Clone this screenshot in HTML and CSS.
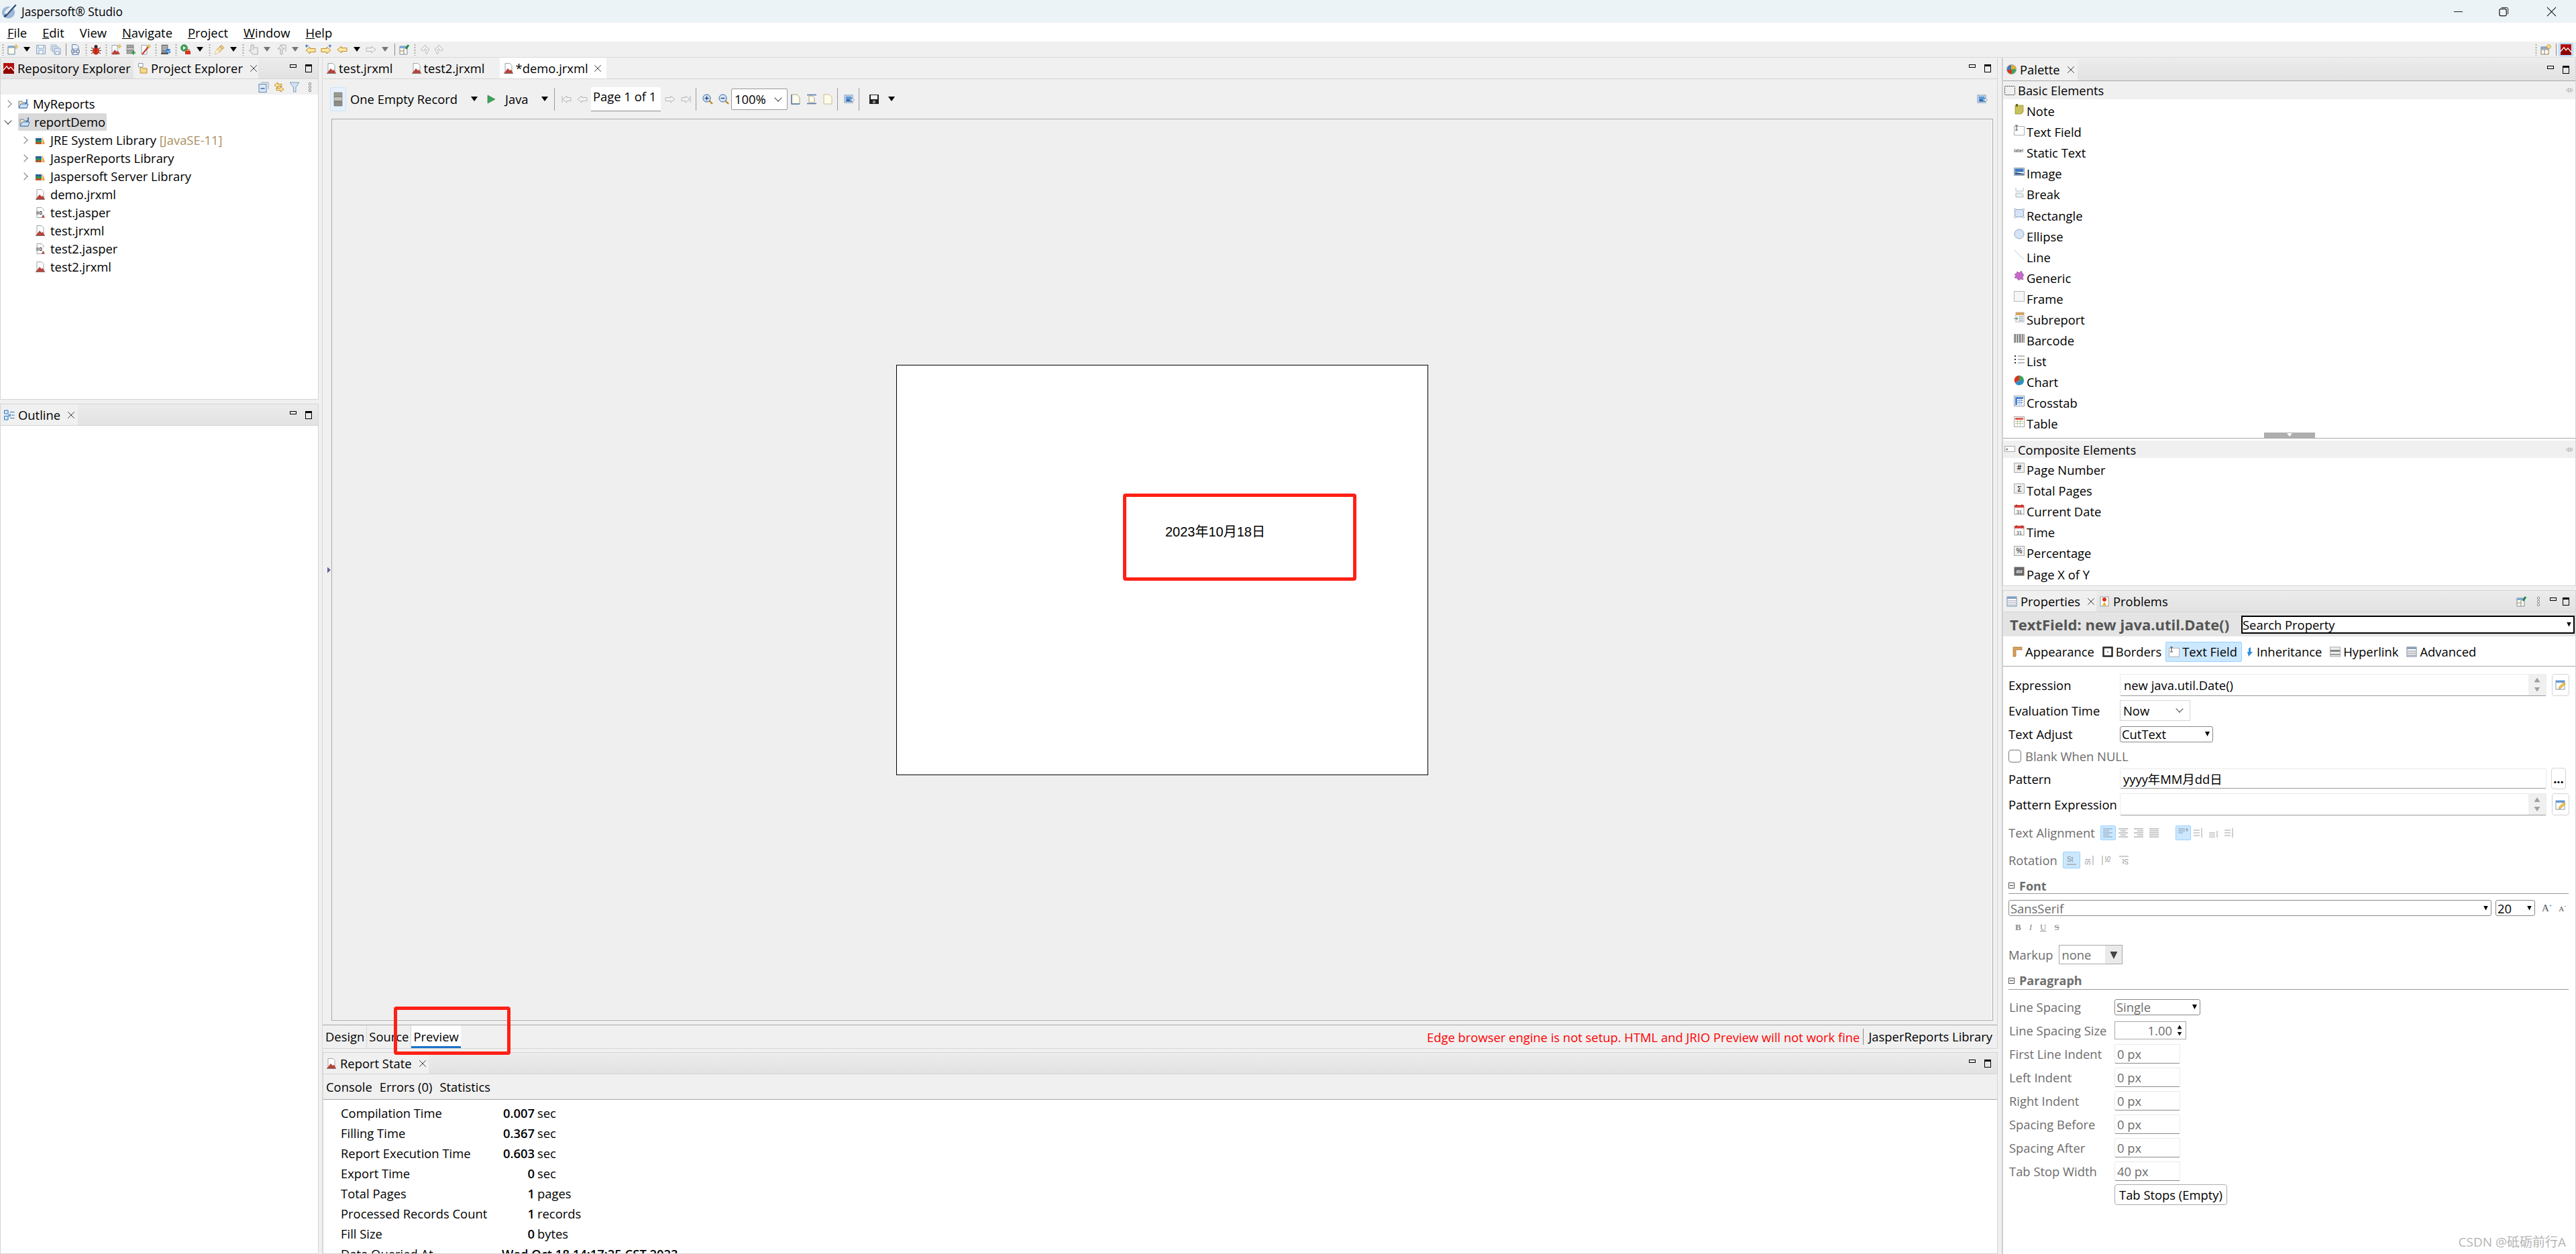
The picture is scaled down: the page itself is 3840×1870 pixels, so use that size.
FILE: index.html
```html
<!DOCTYPE html>
<html lang="en">
<head>
    <meta charset="UTF-8">
    <meta name="viewport" content="width=device-width, initial-scale=1.0">
    <title>Jaspersoft Studio</title>
    <link rel="stylesheet" href="styles.css">
</head>
<body>
<!-- icon sprite, every icon is on a 16x16 grid -->
<svg class="sprite" aria-hidden="true">
    <symbol id="logo" viewBox="0 0 16 16"><ellipse cx="7" cy="9" rx="6.5" ry="6" fill="#9db8d6"/><path d="M2 13 L14 1 L15 2 L4 14z" fill="#2a4a78"/><path d="M3 9 Q7 3 12 3 L5 11z" fill="#e8eef6"/></symbol>
    <symbol id="jr" viewBox="0 0 16 16"><rect width="16" height="16" fill="#b30f0f"/><path d="M0 11 L5 5 L8 9 L11 6 L16 12" fill="none" stroke="#fff" stroke-width="1.5"/><path d="M0 16 V12 L5 6 L8 10 L11 7 L16 13 V16z" fill="#8f0000"/></symbol>
    <symbol id="prj" viewBox="0 0 16 16"><path d="M2.5 .5 H9 V6 H2.5z" fill="#fff" stroke="#8a9ab0"/><path d="M5 6.5 H8 L9 8 H15 V15 H5z" fill="#f5d98c" stroke="#b98d35"/></symbol>
    <symbol id="fj" viewBox="0 0 16 16"><path d="M1 4 H6 L7 6 H13 V14 H1z" fill="#f4e6b8" stroke="#5e7ea8"/><path d="M1 14 L4 8 H15 L13 14z" fill="#cfe0f5" stroke="#3f70b0"/><path d="M13 1 V5 Q13 7 10 7" fill="none" stroke="#2a66c0" stroke-width="1.6"/></symbol>
    <symbol id="lib" viewBox="0 0 16 16"><rect x="1" y="11" width="9" height="3" fill="#b5562c"/><rect x="1" y="8" width="9" height="3" fill="#2f8f55"/><rect x="1" y="5" width="9" height="3" fill="#2a5f98"/><path d="M11 3 L15 14 H11z" fill="#e8a33a"/></symbol>
    <symbol id="jrxml" viewBox="0 0 16 16"><path d="M3 .5 H10 L13 3.5 V15.5 H3z" fill="#fff" stroke="#9aa3ad"/><path d="M1 15.5 L7 8 L10 11 L12 10 L15 15.5z" fill="#b8433a"/><path d="M1 15.5 H15" stroke="#7a7a7a"/></symbol>
    <symbol id="jasper" viewBox="0 0 16 16"><path d="M3 .5 H10 L13 3.5 V15.5 H3z" fill="#fff" stroke="#9aa3ad"/><path d="M2 6 H14 V11 H2z" fill="#fff"/><path d="M3 6 V11 M5 6 V11 M7.5 6.5 H10 V10.5 H7.5z" fill="none" stroke="#333"/><path d="M10 15.5 L12 11 L15 15.5z" fill="#b8433a"/></symbol>
    <symbol id="close" viewBox="0 0 16 16"><path d="M2.5 2.5 L13.5 13.5 M13.5 2.5 L2.5 13.5" stroke="#222" fill="none"/></symbol>
    <symbol id="winmin" viewBox="0 0 16 16"><path d="M1 8 H15" stroke="#111" stroke-width="1"/></symbol>
    <symbol id="winmax" viewBox="0 0 16 16"><rect x="1" y="3.5" width="11" height="11" rx="2" fill="none" stroke="#111" stroke-width="1.3"/><path d="M4 1.5 H12.5 Q14.5 1.5 14.5 3.5 V12" fill="none" stroke="#111"/></symbol>
    <symbol id="winx" viewBox="0 0 16 16"><path d="M1 1 L15 15 M15 1 L1 15" stroke="#111" stroke-width="1.1"/></symbol>

    <symbol id="new" viewBox="0 0 16 16"><path d="M1 3 H11 V15 H1z" fill="#fffbe8" stroke="#5b83b5"/><path d="M1 3 H11 V5.5 H1z" fill="#7fa8d8"/><path d="M13 0 L14 2.5 L16 3.5 L14 4.5 L13 7 L12 4.5 L10 3.5 L12 2.5z" fill="#f5d35c" stroke="#b98d35" stroke-width=".5"/></symbol>
    <symbol id="save" viewBox="0 0 16 16"><path d="M1.5 1.5 H14.5 V14.5 H1.5z" fill="#dce6f2" stroke="#8fa6c3"/><path d="M4 1.5 H12 V6 H4z M5 9 H11 V14.5 H5z" fill="#f7f9fc" stroke="#8fa6c3"/></symbol>
    <symbol id="saveall" viewBox="0 0 16 16"><path d="M1 1 H9 V9 H1z" fill="#dce6f2" stroke="#a5b5c8"/><path d="M3.5 3.5 H11.5 V11.5 H3.5z" fill="#dce6f2" stroke="#a5b5c8"/><path d="M6 6 H15 V15 H6z" fill="#dce6f2" stroke="#8fa6c3"/><path d="M8 11 H13 V15 H8z" fill="#fff" stroke="#8fa6c3"/></symbol>
    <symbol id="bin" viewBox="0 0 16 16"><path d="M2.5 .5 H9 L12 3.5 V7 H2.5z M2.5 14 V15.5 H12 V14" fill="#eef3fa" stroke="#5b83b5"/><rect x="1" y="7" width="14" height="7" fill="#fff"/><path d="M2 8 H5 V13 H2z M7 8 V13 M9.5 8 H13 V13 H9.5z" fill="none" stroke="#2a4a78"/></symbol>
    <symbol id="bug" viewBox="0 0 16 16"><path d="M1 5 L4 7 M15 5 L12 7 M1 14 L4 12 M15 14 L12 12 M0 9.5 H3 M16 9.5 H13" stroke="#333"/><ellipse cx="8" cy="10" rx="5" ry="5.5" fill="#d8341e"/><circle cx="8" cy="3.5" r="2.5" fill="#3a2a20"/><path d="M8 5 V15" stroke="#7a1608"/></symbol>
    <symbol id="newrep" viewBox="0 0 16 16"><path d="M2 1.5 H10 V15 H2z" fill="#fff" stroke="#9aa3ad"/><path d="M1 15 L6 8 L9 11 L11 10 L14 15z" fill="#b8433a"/><path d="M13 0 L14 2 L16 3 L14 4 L13 6 L12 4 L10 3 L12 2z" fill="#f5d35c" stroke="#b98d35" stroke-width=".5"/></symbol>
    <symbol id="dbplus" viewBox="0 0 16 16"><rect x="2" y="1" width="10" height="4" fill="#a7a7a7" stroke="#666" stroke-width=".6"/><rect x="2" y="5" width="10" height="4" fill="#c9c9c9" stroke="#666" stroke-width=".6"/><rect x="2" y="9" width="10" height="5" fill="#a7a7a7" stroke="#666" stroke-width=".6"/><path d="M9 12.5 H15 M12 9.5 V15.5" stroke="#2f9e44" stroke-width="2"/></symbol>
    <symbol id="wand" viewBox="0 0 16 16"><path d="M2 1.5 H10 V15 H2z" fill="#fff" stroke="#9aa3ad"/><path d="M3 15 L12 4" stroke="#c73b2b" stroke-width="2.2"/><path d="M13 0 L14 2 L16 3 L14 4 L13 6 L12 4 L10 3 L12 2z" fill="#f5d35c" stroke="#b98d35" stroke-width=".5"/></symbol>
    <symbol id="server" viewBox="0 0 16 16"><rect x="2" y="1" width="9" height="12" fill="#8b8f96" stroke="#555" stroke-width=".6"/><path d="M3 4 H10 M3 7 H10" stroke="#ddd"/><rect x="1" y="13" width="11" height="2" fill="#555"/><rect x="9" y="7" width="6" height="6" fill="#2a7fd4"/><path d="M10 10 L12 12 L15 8" stroke="#fff" fill="none"/></symbol>
    <symbol id="runrep" viewBox="0 0 16 16"><circle cx="5.5" cy="5.5" r="5" fill="#3da35a" stroke="#24733c" stroke-width=".6"/><path d="M4 3 L8 5.5 L4 8z" fill="#fff"/><rect x="7" y="10" width="8" height="5" fill="#d8341e"/><rect x="9" y="8" width="4" height="2" fill="none" stroke="#d8341e"/></symbol>
    <symbol id="pen" viewBox="0 0 16 16"><path d="M1 15 L4 8 L11 1 L15 5 L8 12z" fill="#f0d9a0" stroke="#b98d35" stroke-width=".7"/><path d="M1 15 L4 8 L8 12z" fill="#f9f1da"/><path d="M9 3 L13 7" stroke="#a8773a"/></symbol>
    <symbol id="navdown" viewBox="0 0 16 16"><path d="M5 1 H9 V9 H12 L7 14 L2 9 H5z" fill="#e8e8e8" stroke="#aaa"/><path d="M10 5 H15 V15 H7" fill="#eee" stroke="#aaa"/></symbol>
    <symbol id="navup" viewBox="0 0 16 16"><path d="M7 15 V7 H3 L8 2 L13 7 H10 V15z" fill="#e8e8e8" stroke="#aaa"/><path d="M6 1 H15 V11" fill="none" stroke="#aaa"/></symbol>
    <symbol id="yleft" viewBox="0 0 16 16"><path d="M1 8 L7 3 V5.5 H15 V10.5 H7 V13z" fill="#fde9a9" stroke="#c08a1e"/></symbol>
    <symbol id="yleftstar" viewBox="0 0 16 16"><path d="M1 9 L7 4 V6.5 H15 V11.5 H7 V14z" fill="#fde9a9" stroke="#c08a1e"/><path d="M2 0 V5 M0 2.5 H5" stroke="#2a5fb0"/></symbol>
    <symbol id="yrightstar" viewBox="0 0 16 16"><path d="M15 9 L9 4 V6.5 H1 V11.5 H9 V14z" fill="#fde9a9" stroke="#c08a1e"/><path d="M14 0 V5 M11.5 2.5 H16" stroke="#2a5fb0"/></symbol>
    <symbol id="gleft" viewBox="0 0 16 16"><path d="M1 8 L7 3 V5.5 H15 V10.5 H7 V13z" fill="#f2f2f2" stroke="#b5b5b5"/></symbol>
    <symbol id="gright" viewBox="0 0 16 16"><path d="M15 8 L9 3 V5.5 H1 V10.5 H9 V13z" fill="#f2f2f2" stroke="#b5b5b5"/></symbol>
    <symbol id="gfirst" viewBox="0 0 16 16"><path d="M2 3 V13" stroke="#b5b5b5"/><path d="M3 8 L9 3 V5.5 H15 V10.5 H9 V13z" fill="#f2f2f2" stroke="#b5b5b5"/></symbol>
    <symbol id="glast" viewBox="0 0 16 16"><path d="M14 3 V13" stroke="#b5b5b5"/><path d="M13 8 L7 3 V5.5 H1 V10.5 H7 V13z" fill="#f2f2f2" stroke="#b5b5b5"/></symbol>
    <symbol id="persp" viewBox="0 0 16 16"><path d="M1 3 H12 V15 H1z" fill="#fff" stroke="#7a8aa0"/><path d="M1 3 H12 V6 H1z" fill="#7fa8d8"/><path d="M7 15 V6 M1 10 H7" stroke="#9a7a3a"/><path d="M10 7 L14 1" stroke="#1e8a3e" stroke-width="3"/></symbol>
    <symbol id="tpl" viewBox="0 0 16 16"><rect x="1" y="4" width="11" height="11" fill="#fff" stroke="#8c7a50"/><path d="M1 8 H12 M6 8 V15" stroke="#8c7a50"/><rect x="1" y="4" width="11" height="3" fill="#7fa8d8"/><circle cx="12.5" cy="3.5" r="3" fill="#f5d98c" stroke="#c08a1e" stroke-width=".7"/></symbol>
    <symbol id="undo" viewBox="0 0 16 16"><path d="M2 8 L9 1 L10 4 L15 7 L11 15 L9 13 L11 8 L8 7 L7 10z" fill="#f2f2f2" stroke="#bdbdbd"/></symbol>
    <symbol id="redo" viewBox="0 0 16 16"><path d="M14 8 L7 1 L6 4 L1 7 L5 15 L7 13 L5 8 L8 7 L9 10z" fill="#f2f2f2" stroke="#bdbdbd"/></symbol>

    <symbol id="collapse" viewBox="0 0 16 16"><path d="M4 1 H15 V11" fill="none" stroke="#8da4c0"/><rect x="1" y="3.5" width="11" height="12" fill="#dce8f5" stroke="#5f87b8"/><path d="M3.5 10 H9.5" stroke="#2a5f98" stroke-width="1.4"/></symbol>
    <symbol id="link" viewBox="0 0 16 16"><path d="M1 5 L6 1 V3.5 H12 V6.5 H6 V9z" fill="#fde9a9" stroke="#c08a1e"/><path d="M15 11 L10 7 V9.5 H4 V12.5 H10 V15z" fill="#fde9a9" stroke="#c08a1e"/></symbol>
    <symbol id="filter" viewBox="0 0 16 16"><path d="M1 1 H15 L10 8 V15 L6.5 15 V8z" fill="#d3e4f5" stroke="#7e9cbd"/></symbol>
    <symbol id="dots" viewBox="0 0 16 16"><circle cx="8" cy="3" r="1.7" fill="#fff" stroke="#666" stroke-width=".8"/><circle cx="8" cy="8" r="1.7" fill="#fff" stroke="#666" stroke-width=".8"/><circle cx="8" cy="13" r="1.7" fill="#fff" stroke="#666" stroke-width=".8"/></symbol>
    <symbol id="outline" viewBox="0 0 16 16"><path d="M.5 1 H6 V6 H.5z M.5 9.5 H6 V15 H.5z M7 7 H9.5 V9.5 H7z" fill="#d8e8f8" stroke="#2a74bd"/><path d="M9 3.5 H15.5 M11 8 H15.5 M9 12.5 H15.5" stroke="#2a74bd"/></symbol>
    <symbol id="pin" viewBox="0 0 16 16"><path d="M1 8 L6 4 V12z M15 8 L10 4 V12z" fill="#fff" stroke="#777"/></symbol>

    <symbol id="db" viewBox="0 0 16 24"><rect x="2" y="2" width="12" height="6" fill="#9a9a92" stroke="#666" stroke-width=".6"/><rect x="2" y="8.5" width="12" height="6" fill="#c4c4bb" stroke="#666" stroke-width=".6"/><rect x="2" y="15" width="12" height="7" fill="#8d8d85" stroke="#666" stroke-width=".6"/></symbol>
    <symbol id="play" viewBox="0 0 16 16"><path d="M3 2 L14 8 L3 14z" fill="#3da35a" stroke="#24733c" stroke-width=".6"/></symbol>
    <symbol id="zoomin" viewBox="0 0 16 16"><path d="M10 10 L15 15" stroke="#c08a1e" stroke-width="2.4"/><circle cx="6.5" cy="6.5" r="5.5" fill="#d8e8f8" stroke="#2a5f98"/><path d="M3.5 6.5 H9.5 M6.5 3.5 V9.5" stroke="#1c3f78" stroke-width="1.4"/></symbol>
    <symbol id="zoomout" viewBox="0 0 16 16"><path d="M10 10 L15 15" stroke="#c08a1e" stroke-width="2.4"/><circle cx="6.5" cy="6.5" r="5.5" fill="#d8e8f8" stroke="#2a5f98"/><path d="M3.5 6.5 H9.5" stroke="#1c3f78" stroke-width="1.4"/></symbol>
    <symbol id="fitpage" viewBox="0 0 16 16"><path d="M2 1 H10 L14 5 V15 H2z" fill="#fdfbea" stroke="#a9a485"/><path d="M2 1 V15 H14" fill="none" stroke="#4e76ad" stroke-width="1.4"/></symbol>
    <symbol id="fitwidth" viewBox="0 0 16 16"><path d="M1 1.5 H15 M1 14.5 H15" stroke="#4e76ad" stroke-width="1.4"/><path d="M4 3 H9 L12 6 V13 H4z" fill="#fdfbea" stroke="#a9a485"/></symbol>
    <symbol id="actual" viewBox="0 0 16 16"><path d="M2 1 H10 L14 5 V15 H2z" fill="#fdfbea" stroke="#c9bc8f"/></symbol>
    <symbol id="export" viewBox="0 0 16 16"><rect x="1" y="2" width="12" height="11" fill="#fff" stroke="#6f8cb0"/><rect x="2.5" y="3.5" width="9" height="8" fill="#5f9ad8"/><path d="M2.5 11.5 L6 7 L8 9 L11.5 6 V11.5z" fill="#2f6aa8"/><path d="M9 8 H12 V6 L16 9 L12 12 V10 H9z" fill="#eef3fa" stroke="#5f87b8" stroke-width=".6"/></symbol>
    <symbol id="disk" viewBox="0 0 16 16"><path d="M1 1 H15 V15 H1z" fill="#222"/><rect x="3" y="2" width="10" height="6" fill="#f2f2f2"/><rect x="6" y="10" width="4" height="4" fill="#888"/></symbol>

    <symbol id="note" viewBox="0 0 16 16"><path d="M2 2 H14 V12 L11 15 H2z" fill="#c9c25a" stroke="#8e8a2a" stroke-width=".7"/><rect x="3" y="0" width="3" height="4" fill="#6e6a1c"/></symbol>
    <symbol id="tfield" viewBox="0 0 16 16"><rect x=".5" y="2.5" width="15" height="13" fill="#fff" stroke="#b0b0b0"/><path d="M2 1 H6 M4 1 V8 M2 8 H6" stroke="#444"/></symbol>
    <symbol id="image" viewBox="0 0 16 16"><rect x=".5" y="2.5" width="15" height="11" fill="#fff" stroke="#8a9bb0"/><rect x="1.5" y="3.5" width="13" height="5" fill="#3f78c0"/><path d="M1.5 12.5 V9 L15 11 V12.5z" fill="#2c4f7a"/></symbol>
    <symbol id="break" viewBox="0 0 16 16"><path d="M3 1 V6 H14 V1" fill="none" stroke="#b0b8c0"/><path d="M3 9 V15 H14 V11 L12 9z" fill="#e6eff2" stroke="#b0b8c0"/></symbol>
    <symbol id="rect" viewBox="0 0 16 16"><rect x="1.5" y="2.5" width="13" height="11" fill="#d5e3f5" stroke="#93a8c4"/><path d="M0 1 H3 V4 H0z M13 1 H16 V4 H13z M0 12 H3 V15 H0z M13 12 H16 V15 H13z" fill="#e8eef6" stroke="#8aa0bd" stroke-width=".5"/></symbol>
    <symbol id="ellipse" viewBox="0 0 16 16"><circle cx="8" cy="8" r="7" fill="#d5e3f5" stroke="#93a8c4"/></symbol>
    <symbol id="line" viewBox="0 0 16 16"><path d="M1 1 L15 15" stroke="#b4c6dc"/></symbol>
    <symbol id="generic" viewBox="0 0 16 16"><path d="M1 6 L4 5 L5 2 L8 4 L11 1 L13 5 L15 7 L13 10 L14 14 L10 13 L7 15 L5 12 L1 11 L3 8z" fill="#c66ac9" stroke="#8b3f8e" stroke-width=".6"/></symbol>
    <symbol id="frame" viewBox="0 0 16 16"><rect x=".5" y=".5" width="15" height="15" fill="#f6f6f6" stroke="#b9b9b9"/></symbol>
    <symbol id="subrep" viewBox="0 0 16 16"><rect x="3" y="1" width="12" height="14" fill="#fff" stroke="#b0b0b0"/><rect x="3" y="1" width="12" height="4" fill="#d9a25f"/><path d="M7 7 H14 M7 10 H14 M7 13 H14 M9 6 V14 M12 6 V14" stroke="#9ab0c8"/><path d="M0 10 H6 M3.5 8 L6 10 L3.5 12" stroke="#4a8a5a" fill="none"/></symbol>
    <symbol id="barcode" viewBox="0 0 16 16"><path d="M1 1 V14 M3 1 V14 M5.5 1 V14 M8 1 V14 M10 1 V14 M12.5 1 V14 M15 1 V14" stroke="#333" stroke-width="1"/></symbol>
    <symbol id="list" viewBox="0 0 16 16"><path d="M1 2 H3 V4 H1z M1 7 H3 V9 H1z M1 12 H3 V14 H1z" fill="#333"/><path d="M6 3 H16 M6 8 H16 M6 13 H16" stroke="#777"/></symbol>
    <symbol id="chart" viewBox="0 0 16 16"><path d="M8 8 V1 A7 7 0 0 1 15 8z" fill="#3ba55a"/><path d="M8 8 H15 A7 7 0 0 1 2 12z" fill="#2c8fc9"/><path d="M8 8 L2 12 A7 7 0 0 1 8 1z" fill="#d8341e"/></symbol>
    <symbol id="cross" viewBox="0 0 16 16"><rect x=".5" y=".5" width="15" height="15" fill="#fff" stroke="#8a9bb0"/><rect x="2" y="2" width="12" height="3" fill="#4d83cf"/><rect x="2" y="2" width="3" height="12" fill="#4d83cf"/><path d="M5 7.5 H14 M5 10.5 H14 M8 5 V14 M11 5 V14" stroke="#7ea4d8"/></symbol>
    <symbol id="table" viewBox="0 0 16 16"><rect x=".5" y=".5" width="15" height="15" fill="#fff" stroke="#a5a5a5"/><rect x="2" y="2" width="12" height="3" fill="#e65b4f"/><path d="M2 7.5 H14 M2 10.5 H14 M5.5 5 V14 M9.5 5 V14" stroke="#c0c8a0"/></symbol>
    <symbol id="dashed" viewBox="0 0 16 16"><rect x=".5" y="1.5" width="15" height="13" rx="1" fill="none" stroke="#222" stroke-dasharray="1.5 1.2"/></symbol>

    <symbol id="props" viewBox="0 0 16 16"><rect x="1" y="1" width="14" height="14" fill="#fff" stroke="#6f8cb0"/><rect x="1" y="1" width="14" height="3" fill="#7fa0c8"/><path d="M2 7 H14 M2 10 H14 M2 13 H14" stroke="#99a"/></symbol>
    <symbol id="problems" viewBox="0 0 16 16"><rect x="2" y="1" width="12" height="14" fill="#fff" stroke="#999"/><circle cx="8" cy="5" r="3" fill="#d8341e"/><path d="M5 14 L8 8.5 L11 14z" fill="#e8b020"/></symbol>
    <symbol id="appear" viewBox="0 0 16 16"><path d="M2 1 H15 V5 H6 V15 H2z" fill="#d9a25f" stroke="#9a6a2a" stroke-width=".7"/></symbol>
    <symbol id="borders" viewBox="0 0 16 16"><rect x="1.5" y="1.5" width="13" height="13" fill="#fff" stroke="#222" stroke-width="2.4"/><circle cx="8" cy="8" r="1" fill="#555"/></symbol>
    <symbol id="inherit" viewBox="0 0 16 16"><path d="M11 1 V8 H14 L8 15 L6 8 H8 V3z" fill="#2f8fe0"/></symbol>
    <symbol id="hyper" viewBox="0 0 16 16"><rect x=".5" y="1" width="15" height="14" fill="#eee" stroke="#aaa"/><rect x="1" y="5" width="14" height="3" fill="#888"/><rect x="1" y="11" width="14" height="2" fill="#999"/></symbol>
    <symbol id="adv" viewBox="0 0 16 16"><rect x="1" y="1" width="14" height="14" fill="#fff" stroke="#6f7f95"/><rect x="1" y="1" width="14" height="3" fill="#8aa0b8"/><path d="M2 7 H14 M2 10 H14 M2 13 H14" stroke="#778"/></symbol>
    <symbol id="edit" viewBox="0 0 16 16"><rect x="1" y="2" width="13" height="13" fill="#fff" stroke="#7a9ac0"/><rect x="1" y="2" width="13" height="3" fill="#5f9ad8"/><path d="M5 15 L6 11 L13 4 L15.5 6.5 L8.5 13.5z" fill="#f0c050" stroke="#b98d35" stroke-width=".6"/></symbol>
    <symbol id="al-l" viewBox="0 0 16 16"><path d="M1 2 H15 M1 5 H10 M1 8 H15 M1 11 H10 M1 14 H15" stroke="#7f95ad" stroke-width="1.1"/></symbol>
    <symbol id="al-c" viewBox="0 0 16 16"><path d="M1 2 H15 M4 5 H12 M1 8 H15 M4 11 H12 M1 14 H15" stroke="#8f8f8f" stroke-width="1.1"/></symbol>
    <symbol id="al-r" viewBox="0 0 16 16"><path d="M1 2 H15 M6 5 H15 M1 8 H15 M6 11 H15 M1 14 H15" stroke="#8f8f8f" stroke-width="1.1"/></symbol>
    <symbol id="al-j" viewBox="0 0 16 16"><path d="M1 2 H15 M1 5 H15 M1 8 H15 M1 11 H15 M1 14 H15" stroke="#8f8f8f" stroke-width="1.1"/></symbol>
    <symbol id="va-t" viewBox="0 0 16 16"><path d="M1 2 H11 M1 5 H11 M1 8 H8" stroke="#7f95ad"/><path d="M14 1 V6 M12 3 H16" stroke="#8f8f8f"/></symbol>
    <symbol id="va-m" viewBox="0 0 16 16"><path d="M1 4 H10 M1 8 H10 M1 12 H10" stroke="#a0a0a0"/><path d="M13 1 V15" stroke="#a0a0a0"/></symbol>
    <symbol id="va-b" viewBox="0 0 16 16"><path d="M1 8 H10 M1 11 H10 M1 14 H10" stroke="#a0a0a0"/><path d="M13 5 V15" stroke="#a0a0a0"/></symbol>
</svg>

<div class="app">
    <div class="titlebar">
        <svg class="ic logo"><use href="#logo"/></svg>
        <span class="title-text">Jaspersoft® Studio</span>
        <div class="win-btns">
            <svg class="win-btn"><use href="#winmin"/></svg>
            <svg class="win-btn"><use href="#winmax"/></svg>
            <svg class="win-btn"><use href="#winx"/></svg>
        </div>
    </div>
    <div class="menubar">
        <span><u>F</u>ile</span><span><u>E</u>dit</span><span>View</span><span><u>N</u>avigate</span><span><u>P</u>roject</span><span><u>W</u>indow</span><span><u>H</u>elp</span>
    </div>
    <div class="toolbar">
        <i class="grip"></i>
        <span class="cell"><svg class="ic"><use href="#new"/></svg></span><i class="arrow"></i>
        <span class="cell"><svg class="ic"><use href="#save"/></svg></span>
        <span class="cell"><svg class="ic"><use href="#saveall"/></svg></span>
        <i class="vsep"></i>
        <span class="cell"><svg class="ic"><use href="#bin"/></svg></span>
        <i class="grip"></i>
        <span class="cell"><svg class="ic"><use href="#bug"/></svg></span>
        <i class="grip"></i>
        <span class="cell"><svg class="ic"><use href="#newrep"/></svg></span>
        <span class="cell"><svg class="ic"><use href="#dbplus"/></svg></span>
        <span class="cell"><svg class="ic"><use href="#wand"/></svg></span>
        <i class="grip"></i>
        <span class="cell"><svg class="ic"><use href="#server"/></svg></span>
        <i class="grip"></i>
        <span class="cell"><svg class="ic"><use href="#runrep"/></svg></span><i class="arrow"></i>
        <i class="grip"></i>
        <span class="cell"><svg class="ic"><use href="#pen"/></svg></span><i class="arrow"></i>
        <i class="grip"></i>
        <span class="cell"><svg class="ic"><use href="#navdown"/></svg></span><i class="arrow off"></i>
        <span class="cell"><svg class="ic"><use href="#navup"/></svg></span><i class="arrow off"></i>
        <span class="cell wide"><svg class="ic"><use href="#yleftstar"/></svg></span>
        <span class="cell"><svg class="ic"><use href="#yrightstar"/></svg></span>
        <span class="cell wide"><svg class="ic"><use href="#yleft"/></svg></span><i class="arrow"></i>
        <span class="cell"><svg class="ic"><use href="#gright"/></svg></span><i class="arrow off"></i>
        <i class="vsep"></i>
        <span class="cell"><svg class="ic"><use href="#persp"/></svg></span>
        <i class="grip"></i>
        <span class="cell"><svg class="ic"><use href="#undo"/></svg></span>
        <span class="cell"><svg class="ic"><use href="#redo"/></svg></span>
        <div class="toolbar-end">
            <i class="grip"></i>
            <span class="cell"><svg class="ic"><use href="#tpl"/></svg></span>
            <i class="vsep"></i>
            <span class="persp-btn"><svg class="ic"><use href="#jr"/></svg></span>
        </div>
    </div>

    <div class="workbench">
        <!-- left column -->
        <div class="col-left">
            <section class="panel project">
                <div class="strip">
                    <div class="tab"><svg class="ic"><use href="#jr"/></svg>Repository Explorer</div>
                    <div class="tab on"><svg class="ic"><use href="#prj"/></svg>Project Explorer<svg class="x"><use href="#close"/></svg></div>
                    <div class="min-max"><i class="min"></i><i class="max"></i></div>
                </div>
                <div class="view-tools">
                    <svg class="ic"><use href="#collapse"/></svg>
                    <svg class="ic"><use href="#link"/></svg>
                    <svg class="ic"><use href="#filter"/></svg>
                    <svg class="ic"><use href="#dots"/></svg>
                </div>
                <ul class="tree">
                    <li><i class="chev"></i><svg class="ic"><use href="#fj"/></svg><span>MyReports</span></li>
                    <li><i class="chev open"></i><span class="sel"><svg class="ic"><use href="#fj"/></svg>reportDemo</span></li>
                    <li class="sub"><i class="chev"></i><svg class="ic"><use href="#lib"/></svg><span>JRE System Library <em>[JavaSE-11]</em></span></li>
                    <li class="sub"><i class="chev"></i><svg class="ic"><use href="#lib"/></svg><span>JasperReports Library</span></li>
                    <li class="sub"><i class="chev"></i><svg class="ic"><use href="#lib"/></svg><span>Jaspersoft Server Library</span></li>
                    <li class="sub"><i class="chev none"></i><svg class="ic"><use href="#jrxml"/></svg><span>demo.jrxml</span></li>
                    <li class="sub"><i class="chev none"></i><svg class="ic"><use href="#jasper"/></svg><span>test.jasper</span></li>
                    <li class="sub"><i class="chev none"></i><svg class="ic"><use href="#jrxml"/></svg><span>test.jrxml</span></li>
                    <li class="sub"><i class="chev none"></i><svg class="ic"><use href="#jasper"/></svg><span>test2.jasper</span></li>
                    <li class="sub"><i class="chev none"></i><svg class="ic"><use href="#jrxml"/></svg><span>test2.jrxml</span></li>
                </ul>
            </section>
            <section class="panel outline">
                <div class="strip">
                    <div class="tab on"><svg class="ic"><use href="#outline"/></svg>Outline<svg class="x"><use href="#close"/></svg></div>
                    <div class="min-max"><i class="min"></i><i class="max"></i></div>
                </div>
            </section>
        </div>
        <div class="sash"><i class="sash-arrow"></i></div>

        <!-- editor and report state -->
        <div class="col-center">
            <section class="editor">
                <div class="strip plain">
                    <div class="tab"><svg class="ic"><use href="#jrxml"/></svg>test.jrxml</div>
                    <div class="tab"><svg class="ic"><use href="#jrxml"/></svg>test2.jrxml</div>
                    <div class="tab white"><svg class="ic"><use href="#jrxml"/></svg>*demo.jrxml<svg class="x"><use href="#close"/></svg></div>
                    <div class="min-max"><i class="min"></i><i class="max"></i></div>
                </div>
                <div class="edit-tools">
                    <span class="db-btn"><svg class="db-ic"><use href="#db"/></svg></span>
                    <span class="tool-text">One Empty Record</span><i class="arrow a-record"></i>
                    <svg class="ic nudge"><use href="#play"/></svg>
                    <span class="tool-text java">Java</span><i class="arrow a-java"></i>
                    <i class="tall-sep"></i>
                    <svg class="ic sm"><use href="#gfirst"/></svg><svg class="ic sm"><use href="#gleft"/></svg>
                    <span class="page-box">Page 1 of 1</span>
                    <svg class="ic sm"><use href="#gright"/></svg><svg class="ic sm"><use href="#glast"/></svg>
                    <i class="tall-sep"></i>
                    <svg class="ic sm"><use href="#zoomin"/></svg><svg class="ic sm"><use href="#zoomout"/></svg>
                    <span class="zoom-box">100%<i class="chev open"></i></span>
                    <svg class="ic sm"><use href="#fitpage"/></svg><svg class="ic sm"><use href="#fitwidth"/></svg><svg class="ic sm"><use href="#actual"/></svg>
                    <i class="tall-sep"></i>
                    <svg class="ic sm"><use href="#export"/></svg>
                    <i class="tall-sep"></i>
                    <svg class="ic disk"><use href="#disk"/></svg><i class="arrow a-disk"></i>
                    <svg class="ic far-end"><use href="#export"/></svg>
                </div>
                <div class="canvas">
                    <div class="page">
                        <div class="page-date">2023年10月18日</div>
                    </div>
                </div>
                <div class="editor-foot">
                    <span class="foot-tab">Design</span>
                    <span class="foot-tab">Source</span>
                    <span class="foot-tab active">Preview</span>
                    <span class="engine-msg">Edge browser engine is not setup. HTML and JRIO Preview will not work fine</span>
                    <span class="lib-name">JasperReports Library</span>
                </div>
            </section>
            <section class="panel state">
                <div class="strip">
                    <div class="tab on"><svg class="ic"><use href="#jrxml"/></svg>Report State<svg class="x"><use href="#close"/></svg></div>
                    <div class="min-max"><i class="min"></i><i class="max"></i></div>
                </div>
                <div class="state-tabs"><span>Console</span><span>Errors (0)</span><span>Statistics</span></div>
                <div class="stats">
                    <div class="stat"><span class="k">Compilation Time</span><b>0.007</b><span>sec</span></div>
                    <div class="stat"><span class="k">Filling Time</span><b>0.367</b><span>sec</span></div>
                    <div class="stat"><span class="k">Report Execution Time</span><b>0.603</b><span>sec</span></div>
                    <div class="stat"><span class="k">Export Time</span><b>0</b><span>sec</span></div>
                    <div class="stat"><span class="k">Total Pages</span><b>1</b><span>pages</span></div>
                    <div class="stat"><span class="k">Processed Records Count</span><b>1</b><span>records</span></div>
                    <div class="stat"><span class="k">Fill Size</span><b>0</b><span>bytes</span></div>
                    <div class="stat"><span class="k">Data Queried At</span><b class="wide">Wed Oct 18 14:17:25 CST 2023</b></div>
                </div>
            </section>
        </div>

        <!-- palette and properties -->
        <div class="col-right">
            <section class="panel palette">
                <div class="strip">
                    <div class="tab on"><span class="dot-ic"></span>Palette<svg class="x"><use href="#close"/></svg></div>
                    <div class="min-max"><i class="min"></i><i class="max"></i></div>
                </div>
                <div class="pal-head"><svg class="ic"><use href="#dashed"/></svg>Basic Elements<svg class="ic pin"><use href="#pin"/></svg></div>
                <div class="pal-list basic">
                    <div class="pal-item"><svg class="ic"><use href="#note"/></svg>Note</div>
                    <div class="pal-item"><svg class="ic"><use href="#tfield"/></svg>Text Field</div>
                    <div class="pal-item"><svg class="ic" viewBox="0 0 16 16"><text x="0" y="10" font-family="Liberation Sans, sans-serif" font-size="6.6" fill="#333">label</text></svg>Static Text</div>
                    <div class="pal-item"><svg class="ic"><use href="#image"/></svg>Image</div>
                    <div class="pal-item"><svg class="ic"><use href="#break"/></svg>Break</div>
                    <div class="pal-item"><svg class="ic"><use href="#rect"/></svg>Rectangle</div>
                    <div class="pal-item"><svg class="ic"><use href="#ellipse"/></svg>Ellipse</div>
                    <div class="pal-item"><svg class="ic"><use href="#line"/></svg>Line</div>
                    <div class="pal-item"><svg class="ic"><use href="#generic"/></svg>Generic</div>
                    <div class="pal-item"><svg class="ic"><use href="#frame"/></svg>Frame</div>
                    <div class="pal-item"><svg class="ic"><use href="#subrep"/></svg>Subreport</div>
                    <div class="pal-item"><svg class="ic"><use href="#barcode"/></svg>Barcode</div>
                    <div class="pal-item"><svg class="ic"><use href="#list"/></svg>List</div>
                    <div class="pal-item"><svg class="ic"><use href="#chart"/></svg>Chart</div>
                    <div class="pal-item"><svg class="ic"><use href="#cross"/></svg>Crosstab</div>
                    <div class="pal-item"><svg class="ic"><use href="#table"/></svg>Table</div>
                    <div class="pal-item"><svg class="ic"><use href="#image"/></svg></div>
                    <span class="pal-more"></span>
                </div>
                <div class="pal-head second"><svg class="ic" viewBox="0 0 16 16"><rect x=".5" y="3.5" width="15" height="8" fill="#fff" stroke="#aaa"/><text x="2" y="10" font-family="Liberation Sans, sans-serif" font-size="6" fill="#555">#</text></svg>Composite Elements<svg class="ic pin"><use href="#pin"/></svg></div>
                <div class="pal-list">
                    <div class="pal-item"><svg class="ic" viewBox="0 0 16 16"><rect x=".5" y=".5" width="15" height="14" fill="#eee" stroke="#aaa"/><text x="8" y="11" text-anchor="middle" font-family="Liberation Sans, sans-serif" font-size="11" font-weight="bold" fill="#222">#</text></svg>Page Number</div>
                    <div class="pal-item"><svg class="ic" viewBox="0 0 16 16"><rect x=".5" y=".5" width="15" height="14" fill="#eee" stroke="#aaa"/><text x="8" y="11.5" text-anchor="middle" font-family="DejaVu Sans, sans-serif" font-size="10.5" fill="#222">Σ</text></svg>Total Pages</div>
                    <div class="pal-item"><svg class="ic" viewBox="0 0 16 16"><rect x="1" y="2" width="14" height="13" fill="#fff" stroke="#999"/><rect x="1" y="1" width="14" height="4" fill="#d8443a"/><path d="M4 0 V3 M12 0 V3" stroke="#a02018"/><text x="8" y="13.5" text-anchor="middle" font-family="Liberation Sans, sans-serif" font-size="7.5" fill="#333">31</text></svg>Current Date</div>
                    <div class="pal-item"><svg class="ic" viewBox="0 0 16 16"><rect x="1" y="2" width="14" height="13" fill="#fff" stroke="#999"/><rect x="1" y="1" width="14" height="4" fill="#d8443a"/><path d="M4 0 V3 M12 0 V3" stroke="#a02018"/><text x="8" y="13.5" text-anchor="middle" font-family="Liberation Sans, sans-serif" font-size="7.5" fill="#333">31</text></svg>Time</div>
                    <div class="pal-item"><svg class="ic" viewBox="0 0 16 16"><rect x=".5" y=".5" width="15" height="14" fill="#eee" stroke="#aaa"/><text x="8" y="11" text-anchor="middle" font-family="Liberation Sans, sans-serif" font-size="10" fill="#222">%</text></svg>Percentage</div>
                    <div class="pal-item"><svg class="ic" viewBox="0 0 16 16"><rect x=".5" y=".5" width="15" height="13" fill="#666"/><text x="8" y="9.5" text-anchor="middle" font-family="Liberation Sans, sans-serif" font-size="6.6" font-weight="bold" fill="#fff">#/#</text></svg>Page X of Y</div>
                </div>
            </section>

            <section class="panel props">
                <div class="strip">
                    <div class="tab on"><svg class="ic"><use href="#props"/></svg>Properties<svg class="x"><use href="#close"/></svg></div>
                    <div class="tab"><svg class="ic"><use href="#problems"/></svg>Problems</div>
                    <div class="min-max"><svg class="ic"><use href="#persp"/></svg><svg class="ic"><use href="#dots"/></svg><i class="min"></i><i class="max"></i></div>
                </div>
                <div class="prop-title">
                    <span class="prop-name">TextField: new java.util.Date()</span>
                    <span class="search-box">Search Property<i class="tiny-arrow"></i></span>
                </div>
                <div class="prop-tabs">
                    <span class="ptab"><svg class="ic"><use href="#appear"/></svg>Appearance</span>
                    <span class="ptab"><svg class="ic sm2"><use href="#borders"/></svg>Borders</span>
                    <span class="ptab on"><svg class="ic"><use href="#tfield"/></svg>Text Field</span>
                    <span class="ptab"><svg class="ic"><use href="#inherit"/></svg>Inheritance</span>
                    <span class="ptab"><svg class="ic"><use href="#hyper"/></svg>Hyperlink</span>
                    <span class="ptab"><svg class="ic"><use href="#adv"/></svg>Advanced</span>
                </div>

                <div class="prop-form">
                    <div class="row"><label class="lbl">Expression</label>
                        <div class="field tall">new java.util.Date()<span class="spin-col"><i class="up"></i><i class="down"></i></span></div>
                        <span class="edit-btn"><svg class="ic"><use href="#edit"/></svg></span></div>
                    <div class="row"><label class="lbl">Evaluation Time</label>
                        <div class="win-combo">Now<i class="chev open"></i></div></div>
                    <div class="row"><label class="lbl">Text Adjust</label>
                        <div class="combo adjust">CutText<i class="tiny-arrow"></i></div></div>
                    <div class="row"><span class="check"></span><label class="off">Blank When NULL</label></div>
                    <div class="row"><label class="lbl">Pattern</label>
                        <div class="field">yyyy年MM月dd日</div><span class="dots-btn">...</span></div>
                    <div class="row"><label class="lbl">Pattern Expression</label>
                        <div class="field tall"><span class="spin-col"><i class="up"></i><i class="down"></i></span></div>
                        <span class="edit-btn"><svg class="ic"><use href="#edit"/></svg></span></div>
                    <div class="row icons"><label class="off">Text Alignment</label>
                        <span class="ia on"><svg class="ic"><use href="#al-l"/></svg></span>
                        <span class="ia"><svg class="ic"><use href="#al-c"/></svg></span>
                        <span class="ia"><svg class="ic"><use href="#al-r"/></svg></span>
                        <span class="ia"><svg class="ic"><use href="#al-j"/></svg></span>
                        <span class="ia on second"><svg class="ic"><use href="#va-t"/></svg></span>
                        <span class="ia"><svg class="ic"><use href="#va-m"/></svg></span>
                        <span class="ia"><svg class="ic"><use href="#va-b"/></svg></span>
                        <span class="ia"><svg class="ic"><use href="#va-m"/></svg></span>
                    </div>
                    <div class="row icons"><label class="off">Rotation</label>
                        <span class="ia on rot"><svg class="ic" viewBox="0 0 16 16"><text x="1" y="10" font-family="Liberation Sans, sans-serif" font-size="10" fill="#8a8a8a">St</text><path d="M1 14 H15" stroke="#8a8a8a"/></svg></span>
                        <span class="ia rot"><svg class="ic" viewBox="0 0 16 16"><text transform="translate(10 15) rotate(-90)" font-family="Liberation Sans, sans-serif" font-size="10" fill="#9a9a9a">St</text><path d="M14 1 V15" stroke="#9a9a9a"/></svg></span>
                        <span class="ia rot"><svg class="ic" viewBox="0 0 16 16"><text transform="translate(6 1) rotate(90)" font-family="Liberation Sans, sans-serif" font-size="10" fill="#9a9a9a">St</text><path d="M2 1 V15" stroke="#9a9a9a"/></svg></span>
                        <span class="ia rot"><svg class="ic" viewBox="0 0 16 16"><text transform="translate(15 6) rotate(180)" font-family="Liberation Sans, sans-serif" font-size="10" fill="#9a9a9a">St</text><path d="M1 2 H15" stroke="#9a9a9a"/></svg></span>
                    </div>
                </div>

                <h4 class="sec-head font"><i class="minus"></i>Font</h4>
                <div class="font-row">
                    <div class="combo family off">SansSerif<i class="tiny-arrow"></i></div>
                    <div class="combo size">20<i class="tiny-arrow"></i></div>
                    <span class="font-step">A<sup>+</sup></span><span class="font-step small">A<sup>-</sup></span>
                </div>
                <div class="biu"><b>B</b><i>I</i><u>U</u><s>S</s></div>
                <div class="row markup"><label class="off">Markup</label><div class="markup-combo">none<span class="drop"></span></div></div>

                <h4 class="sec-head para"><i class="minus"></i>Paragraph</h4>
                <div class="para-form">
                    <div class="row"><label class="lbl off">Line Spacing</label><div class="combo spacing off">Single<i class="tiny-arrow"></i></div></div>
                    <div class="row"><label class="lbl off">Line Spacing Size</label><div class="spinner">1.00<span class="spin-btns"><i class="up dark"></i><i class="down dark"></i></span></div></div>
                    <div class="row"><label class="lbl off">First Line Indent</label><div class="px-field">0 px</div></div>
                    <div class="row"><label class="lbl off">Left Indent</label><div class="px-field">0 px</div></div>
                    <div class="row"><label class="lbl off">Right Indent</label><div class="px-field">0 px</div></div>
                    <div class="row"><label class="lbl off">Spacing Before</label><div class="px-field">0 px</div></div>
                    <div class="row"><label class="lbl off">Spacing After</label><div class="px-field">0 px</div></div>
                    <div class="row"><label class="lbl off">Tab Stop Width</label><div class="px-field">40 px</div></div>
                    <div class="row"><span class="lbl"></span><button class="tab-stops">Tab Stops (Empty)</button></div>
                </div>
                <div class="watermark">CSDN @砥砺前行A</div>
            </section>
        </div>
    </div>

    <!-- red marks drawn over the screenshot -->
    <div class="mark mark-date"></div>
    <div class="mark mark-preview"></div>
</div>
</body>
</html>
```

FILE: styles.css
```css
* {
    box-sizing: border-box;
}
html, body {
    margin: 0;
    padding: 0;
}
body {
    font: 18.4px "Open Sans", "Noto Sans CJK SC", sans-serif;
    color: #000;
    background-color: #F0F0F0;
}
ul {
    list-style: none;
    margin: 0;
    padding: 0;
}
.sprite {
    position: absolute;
    width: 0;
    height: 0;
}
.ic {
    width: 16px;
    height: 16px;
    flex: none;
    display: block;
}
.app {
    position: relative;
    width: 3840px;
    height: 1870px;
    overflow: hidden;
    display: flex;
    flex-direction: column;
}

/* title, menu and main toolbar */
.titlebar {
    height: 34px;
    flex: none;
    background-color: #ECF3F7;
    display: flex;
    align-items: center;
    padding-left: 2px;
    font-size: 17.3px;
}
.logo {
    width: 24px;
    height: 24px;
    margin-right: 6px;
}
.win-btns {
    margin-left: auto;
    display: flex;
}
.win-btn {
    width: 15px;
    height: 15px;
    margin-right: 53px;
}
.win-btn:nth-child(2) {
    margin-right: 56px;
}
.win-btn:last-child {
    margin-right: 29px;
}
.menubar {
    height: 28px;
    flex: none;
    background-color: #FFFFFF;
    display: flex;
    align-items: center;
    padding-left: 11px;
    gap: 23px;
}
.toolbar {
    height: 24px;
    flex: none;
    background-color: #F0F0F0;
    display: flex;
    align-items: center;
    border-bottom: 1px solid #DADADA;
}
.toolbar-end {
    margin-left: auto;
    display: flex;
    align-items: center;
    padding-right: 4px;
}
.cell {
    width: 22px;
    display: flex;
    justify-content: center;
}
.cell.wide {
    width: 25px;
}
.grip {
    width: 8px;
    height: 18px;
    background: radial-gradient(circle, #A8A8A0 1px, transparent 1.2px) center top / 3px 4px repeat-y;
}
.vsep {
    width: 8px;
    height: 18px;
    background: linear-gradient(#8A8A8A, #8A8A8A) center / 1px 100% no-repeat;
}
.arrow {
    width: 20px;
    height: 7px;
    flex: none;
    background: #000;
    clip-path: polygon(5px 0, 15px 0, 10px 7px);
}
.arrow.off {
    background: #777;
}
.persp-btn {
    width: 22px;
    height: 20px;
    border: 1px solid #99D1FF;
    border-radius: 3px;
    background-color: #CCE8FF;
    display: flex;
    align-items: center;
    justify-content: center;
}

/* workbench */
.workbench {
    flex: 1;
    min-height: 0;
    display: flex;
}
.col-left {
    width: 475px;
    flex: none;
    display: flex;
    flex-direction: column;
}
.sash {
    width: 5px;
    flex: none;
    display: flex;
    align-items: center;
}
.sash-arrow {
    width: 5px;
    height: 9px;
    margin: 0 0 256px 13px;
    flex: none;
    background: #6060A0;
    clip-path: polygon(0 0, 100% 50%, 0 100%);
}
.col-center {
    width: 2498px;
    flex: none;
    display: flex;
    flex-direction: column;
    border-left: 1px solid #DADADA;
}
.col-right {
    width: 856px;
    flex: none;
    margin-left: 6px;
    display: flex;
    flex-direction: column;
    border-left: 1px solid #C8C8C8;
}
.panel {
    background-color: #FFFFFF;
    border-right: 1px solid #D5D5D5;
    border-left: 1px solid #D5D5D5;
    border-bottom: 1px solid #D5D5D5;
}
.strip {
    height: 32px;
    display: flex;
    background: linear-gradient(#ECECEC, #E2E2E2);
    border-bottom: 1px solid #D5D5D5;
}
.strip.plain {
    background: #F0F0F0;
}
.tab {
    display: flex;
    align-items: center;
    padding: 0 7px 0 4px;
    gap: 5px;
    white-space: nowrap;
}
.tab.on {
    background-color: #F0F0F0;
}
.tab.white {
    background-color: #FFFFFF;
}
.x {
    width: 14px;
    height: 14px;
    flex: none;
    margin-left: 4px;
}
.min-max {
    margin-left: auto;
    display: flex;
    align-items: center;
    gap: 13px;
    padding-right: 9px;
}
.min {
    width: 10px;
    height: 5px;
    border: 1.5px solid #000;
    margin-bottom: 7px;
}
.max {
    width: 10px;
    height: 12px;
    border: 1.5px solid #000;
    border-top-width: 3px;
}

/* project explorer */
.project {
    height: 510px;
    flex: none;
}
.project .tab:first-child {
    padding-left: 4px;
    width: 198px;
}
.project .tab.on {
    width: 186px;
    padding-left: 5px;
}
.view-tools {
    height: 23px;
    background-color: #F0F0F0;
    display: flex;
    align-items: center;
    justify-content: flex-end;
    gap: 7px;
    padding-right: 4px;
}
.tree li {
    height: 27px;
    display: flex;
    align-items: center;
    padding-left: 6px;
}
.tree li .ic {
    margin-left: 8px;
    margin-right: 3px;
}
.tree li.sub {
    padding-left: 30px;
}
.tree li.sub .ic {
    margin-left: 9px;
    margin-right: 4px;
}
.tree span {
    padding: 0 3px;
    line-height: 26px;
    white-space: nowrap;
}
.tree em {
    font-style: normal;
    color: #A89060;
}
.tree span.sel {
    background-color: #D9D9D9;
    border-radius: 2px;
    display: flex;
    align-items: center;
    margin-left: 8px;
    padding: 0 2px;
}
.tree li .sel .ic {
    margin: 0 6px 0 0;
}
.chev {
    width: 12px;
    height: 12px;
    flex: none;
    display: inline-block;
    position: relative;
}
.chev::before {
    content: "";
    position: absolute;
    left: 1px;
    top: 2px;
    width: 7px;
    height: 7px;
    border-top: 1px solid #777;
    border-right: 1px solid #777;
    transform: rotate(45deg);
}
.chev.open::before {
    transform: rotate(135deg);
    top: 0;
    border-color: #444;
}
.chev.none::before {
    display: none;
}
.outline {
    margin-top: 6px;
    flex: 1;
    border-top: 1px solid #D5D5D5;
}
.outline .tab.on {
    width: 115px;
    padding-left: 5px;
}

/* editor */
.editor {
    height: 1478px;
    flex: none;
    display: flex;
    flex-direction: column;
    border-right: 1px solid #D5D5D5;
}
.editor .tab {
    padding: 0 22px 0 5px;
    gap: 3px;
}
.editor .tab.white {
    padding: 0 6px 0 5px;
}
.edit-tools {
    height: 59px;
    flex: none;
    display: flex;
    align-items: center;
    padding-left: 11px;
}
.db-btn {
    width: 24px;
    height: 36px;
    border: 1px solid #CDE4F8;
    border-radius: 3px;
    background-color: #E5F1FB;
    display: flex;
    align-items: center;
    justify-content: center;
    margin-right: 6px;
}
.db-ic {
    width: 16px;
    height: 24px;
}
.tool-text {
    width: 162px;
    flex: none;
    white-space: nowrap;
}
.a-record {
    margin-left: 13px;
}
.nudge {
    margin: 0 13px 0 7px;
}
.tool-text.java {
    width: 37px;
}
.a-java {
    margin: 0 6px 0 12px;
}
.tall-sep {
    width: 1px;
    height: 34px;
    flex: none;
    background-color: #9A9A9A;
    margin: 0 9px 0 -2px;
}
.sm {
    margin-right: 8px;
}
.page-box {
    width: 104px;
    height: 36px;
    margin: 0 6px 0 -3px;
    background-color: #FFFFFF;
    border-bottom: 1px solid #8A8A8A;
    padding: 0 3px;
    line-height: 28px;
    white-space: nowrap;
}
.zoom-box {
    width: 84px;
    height: 32px;
    margin: 0 4px 0 -5px;
    background-color: #FFFFFF;
    border: 1px solid #9A9A9A;
    border-radius: 2px;
    padding-left: 4px;
    display: flex;
    align-items: center;
    justify-content: space-between;
}
.zoom-box .chev {
    margin-right: 6px;
}
.disk {
    margin-left: 5px;
}
.a-disk {
    margin-left: 8px;
}
.far-end {
    margin-left: auto;
    margin-right: 14px;
}
.canvas {
    flex: 1;
    min-height: 0;
    margin: 0 6px 6px 13px;
    background-color: #EFEFEF;
    border: 1px solid #A8A8A8;
    box-shadow: inset -1px -1px 0 #FFFFFF;
    display: flex;
    align-items: center;
    justify-content: center;
}
.page {
    position: relative;
    width: 793px;
    height: 612px;
    background-color: #FFFFFF;
    border: 1px solid #000;
}
.page-date {
    position: absolute;
    left: 400px;
    top: 232px;
    font: 20px "Liberation Sans", "Noto Sans CJK SC", sans-serif;
    white-space: nowrap;
}
.editor-foot {
    height: 36px;
    flex: none;
    border-top: 1px solid #A8A8A8;
    border-bottom: 1px solid #D5D5D5;
    display: flex;
    align-items: center;
    padding-left: 1px;
}
.foot-tab {
    height: 34px;
    line-height: 34px;
    padding: 0 3px;
    border-right: 1px solid #D5D5D5;
}
.foot-tab.active {
    background-color: #FFFFFF;
    border-right: 0;
    border-bottom: 3px solid #1A73C8;
}
.engine-msg {
    margin-left: auto;
    color: #FF0000;
    padding-right: 5px;
    white-space: nowrap;
}
.lib-name {
    height: 24px;
    line-height: 24px;
    border-left: 1px solid #8A8A8A;
    padding: 0 7px;
    white-space: nowrap;
}

/* report state */
.state {
    flex: 1;
    margin-top: 5px;
    border-top: 1px solid #D5D5D5;
    min-height: 0;
    overflow: hidden;
}
.state .tab.on {
    width: 157px;
}
.state-tabs {
    height: 38px;
    background-color: #F0F0F0;
    border-bottom: 1px solid #A8A8A8;
    display: flex;
    align-items: center;
    gap: 11px;
    padding-left: 4px;
}
.stats {
    padding: 4px 0 0 26px;
}
.stat {
    height: 30px;
    display: flex;
    align-items: center;
}
.stat .k {
    width: 240px;
    flex: none;
}
.stat b {
    width: 49px;
    flex: none;
    text-align: right;
    margin-right: 4px;
    font-weight: 600;
    white-space: nowrap;
}
.stat b.wide {
    width: auto;
}

/* palette */
.palette {
    height: 787px;
    margin-top: 1px;
    flex: none;
    display: flex;
    flex-direction: column;
}
.palette .strip {
    height: 34px;
    flex: none;
    border-bottom: 1px solid #A8A8A8;
}
.palette .tab.on {
    width: 111px;
    padding-left: 5px;
}
.dot-ic {
    width: 15px;
    height: 15px;
    flex: none;
    border-radius: 50%;
    background: conic-gradient(#E8B020 0 25%, #3BA55A 0 50%, #D8341E 0 75%, #3F78C0 0);
    border: 1px solid #999;
}
.pal-head {
    height: 27px;
    flex: none;
    background-color: #F0F0F0;
    display: flex;
    align-items: center;
    padding-left: 2px;
    gap: 4px;
}
.pal-head.second {
    margin-top: 2px;
    border-top: 1px solid #FFFFFF;
}
.ic.pin {
    margin-left: auto;
    margin-right: 3px;
    width: 11px;
    height: 11px;
}
.pal-list {
    padding-top: 2px;
}
.pal-list.basic {
    height: 506px;
    flex: none;
    position: relative;
    overflow: hidden;
    border-bottom: 1px solid #A8A8A8;
}
.pal-item {
    height: 31.1px;
    display: flex;
    align-items: center;
    padding-left: 16px;
    gap: 3px;
}
.pal-item .ic {
    margin-top: -6px;
}
.pal-more {
    position: absolute;
    left: 389px;
    bottom: 0;
    width: 76px;
    height: 8px;
    background-color: #AEAEAE;
}
.pal-more::after {
    content: "";
    position: absolute;
    left: 34px;
    top: 1px;
    width: 8px;
    height: 5px;
    background: #FFFFFF;
    clip-path: polygon(0 0, 100% 0, 50% 100%);
}

/* properties */
.props {
    position: relative;
    flex: 1;
    margin-top: 6px;
    border-top: 1px solid #D5D5D5;
    border-bottom: 0;
    min-height: 0;
}
.props .tab.on {
    width: 139px;
    padding-left: 5px;
}
.props .tab {
    padding-left: 4px;
}
.props .min-max {
    gap: 9px;
}
.prop-title {
    height: 36px;
    background-color: #E4E4E4;
    display: flex;
    align-items: center;
    justify-content: space-between;
    padding-left: 10px;
    padding-right: 1px;
}
.prop-name {
    font-weight: 700;
    font-size: 22px;
    color: #555;
    white-space: nowrap;
}
.search-box {
    width: 497px;
    height: 27px;
    border: 2px solid #000;
    background-color: #FFFFFF;
    display: flex;
    align-items: center;
    justify-content: space-between;
    padding-right: 3px;
}
.tiny-arrow {
    width: 7px;
    height: 7px;
    flex: none;
    background: #000;
    clip-path: polygon(0 0, 100% 0, 50% 100%);
}
.prop-tabs {
    height: 44px;
    margin-top: 1px;
    border-bottom: 1px solid #A8A8A8;
    display: flex;
    align-items: center;
    padding-left: 13px;
    gap: 12px;
}
.ptab {
    display: flex;
    align-items: center;
    gap: 4px;
    white-space: nowrap;
}
.ptab.on {
    height: 30px;
    padding: 0 6px 0 4px;
    margin: 0 -10px 0 -6px;
    border: 1px solid #99D1FF;
    border-radius: 2px;
    background-color: #CCE8FF;
}
.prop-form {
    display: grid;
    grid-template-rows: 38px 38px 33px 33px 34px 43px 41px 41px;
    padding: 8px 10px 0 8px;
}
.row {
    display: flex;
    align-items: center;
}
.lbl {
    width: 166px;
    flex: none;
    white-space: nowrap;
}
.off {
    color: #6D6D6D;
    white-space: nowrap;
}
.field {
    flex: none;
    width: 636px;
    height: 30px;
    background-color: #FFFFFF;
    border: 1px solid #EAEAEA;
    border-bottom: 1px solid #9A9A9A;
    border-radius: 2px;
    display: flex;
    align-items: center;
    padding-left: 4px;
}
.field.tall {
    height: 33px;
    padding-left: 5px;
}
.spin-col {
    margin-left: auto;
    width: 26px;
    height: 100%;
    background-color: #F0F0F0;
    display: flex;
    flex-direction: column;
    align-items: center;
    justify-content: center;
    gap: 7px;
}
.up, .down {
    width: 9px;
    height: 7px;
    background: #A0A0A0;
    clip-path: polygon(50% 0, 100% 100%, 0 100%);
}
.down {
    clip-path: polygon(0 0, 100% 0, 50% 100%);
}
.up.dark, .down.dark {
    width: 7px;
    height: 6px;
    background: #111;
}
.edit-btn {
    width: 26px;
    height: 33px;
    margin-left: 8px;
    border: 1px solid #D5D5D5;
    border-radius: 4px;
    display: flex;
    align-items: center;
    justify-content: center;
}
.dots-btn {
    width: 22px;
    height: 32px;
    margin-left: 7px;
    border: 1px solid #D5D5D5;
    border-radius: 4px;
    text-align: center;
    line-height: 30px;
    font-weight: 700;
}
.win-combo {
    width: 105px;
    height: 31px;
    border: 1px solid #D5D5D5;
    display: flex;
    align-items: center;
    justify-content: space-between;
    padding: 0 8px 0 4px;
}
.combo {
    height: 24px;
    border: 1px solid #8A8A8A;
    border-radius: 3px;
    display: flex;
    align-items: center;
    justify-content: space-between;
    padding: 0 4px 0 2px;
    flex: none;
}
.combo.adjust {
    width: 139px;
}
.check {
    width: 19px;
    height: 19px;
    border: 1px solid #777;
    border-radius: 4px;
    margin-right: 6px;
    flex: none;
}
.icons .ia.on:first-of-type {
    margin-left: 8px;
}
.ia {
    width: 23px;
    height: 22px;
    margin-right: 0;
    display: flex;
    align-items: center;
    justify-content: center;
    flex: none;
}
.ia.on {
    background-color: #CCE8FF;
    border: 1px solid #99D1FF;
    border-radius: 2px;
}
.ia.second {
    margin-left: 20px;
}
.ia.rot {
    width: 26px;
    height: 25px;
}
.sec-head {
    margin: 0 10px 0 8px;
    display: flex;
    align-items: center;
    font-size: 18px;
    font-weight: 700;
    color: #6D6D6D;
    border-bottom: 1px solid #9A9A9A;
}
.sec-head.font {
    height: 24px;
    margin-top: 6px;
}
.sec-head.para {
    height: 27px;
    margin-top: 11px;
}
.minus {
    width: 9px;
    height: 9px;
    margin-right: 7px;
    border: 1px solid #555;
    background: linear-gradient(#333, #333) center / 5px 1px no-repeat;
}
.font-row {
    display: flex;
    align-items: center;
    margin: 9px 0 0 8px;
}
.combo.family {
    width: 720px;
}
.combo.size {
    width: 59px;
    margin-left: 6px;
}
.font-step {
    margin-left: 10px;
    font: 15px "Liberation Serif", serif;
    color: #555;
}
.font-step.small {
    font-size: 11px;
}
.font-step sup {
    color: #3F78C0;
    font-size: 8px;
}
.biu {
    height: 16px;
    margin: 9px 0 0 18px;
    display: flex;
    gap: 12px;
    font: 13px "Liberation Serif", serif;
    color: #8A8A8A;
}
.row.markup {
    margin: 18px 0 0 8px;
    height: 29px;
}
.markup-combo {
    width: 95px;
    height: 29px;
    margin-left: 9px;
    border: 1px solid #A8A8A8;
    color: #6D6D6D;
    display: flex;
    align-items: center;
    justify-content: space-between;
    padding: 0 0 0 3px;
}
.drop {
    width: 25px;
    height: 100%;
    background: #EAEAEA;
    position: relative;
}
.drop::after {
    content: "";
    position: absolute;
    left: 7px;
    top: 9px;
    width: 11px;
    height: 11px;
    background: #444;
    clip-path: polygon(0 0, 100% 0, 50% 100%);
}
.para-form {
    display: grid;
    grid-auto-rows: 35px;
    padding: 8px 0 0 9px;
}
.para-form .lbl {
    width: 157px;
}
.combo.spacing {
    width: 128px;
}
.spinner {
    width: 107px;
    height: 27px;
    border: 1px solid #A8A8A8;
    color: #6D6D6D;
    display: flex;
    align-items: center;
    justify-content: flex-end;
}
.spin-btns {
    width: 18px;
    margin-left: 2px;
    display: flex;
    flex-direction: column;
    align-items: center;
    gap: 4px;
}
.px-field {
    width: 98px;
    height: 29px;
    border: 1px solid #EAEAEA;
    border-bottom: 1px solid #8A8A8A;
    border-radius: 2px;
    padding-left: 3px;
    line-height: 27px;
    color: #6D6D6D;
}
.tab-stops {
    width: 168px;
    height: 31px;
    padding: 0;
    background-color: #FFFFFF;
    border: 1px solid #ADADAD;
    border-radius: 4px;
    font: inherit;
    color: #000;
    white-space: nowrap;
}
.watermark {
    position: absolute;
    right: 14px;
    bottom: 5px;
    color: #B4B4B4;
    font-size: 19px;
    white-space: nowrap;
}

/* annotation boxes */
.mark {
    position: absolute;
    border: 5px solid #FF2015;
    border-radius: 4px;
}
.mark-date {
    left: 1674px;
    top: 736px;
    width: 348px;
    height: 130px;
}
.mark-preview {
    left: 587px;
    top: 1501px;
    width: 174px;
    height: 72px;
}
```
